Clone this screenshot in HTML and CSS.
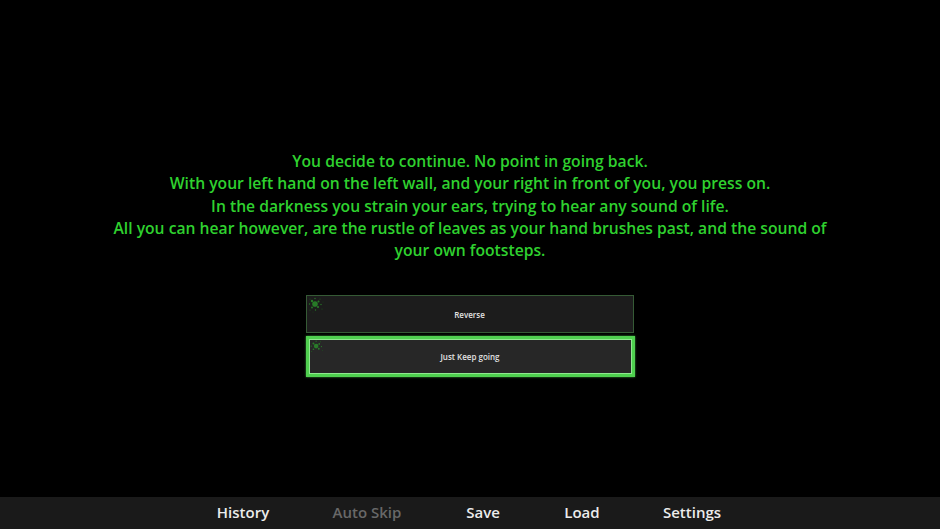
FILE: index.html
```html
<!DOCTYPE html>
<html>
<head>
<meta charset="utf-8">
<link rel="stylesheet" href="styles.css">
</head>
<body>
<div class="screen">
  <main class="stage">
    <div class="narration">
      <p>You decide to continue. No point in going back.</p>
      <p>With your left hand on the left wall, and your right in front of you, you press on.</p>
      <p>In the darkness you strain your ears, trying to hear any sound of life.</p>
      <p>All you can hear however, are the rustle of leaves as your hand brushes past, and the sound of your own footsteps.</p>
    </div>
    <div class="choices">
      <button class="choice">
        <svg class="splat" width="18" height="18" viewBox="0 0 18 18"><g fill="#2a8a2a" opacity="0.85"><circle cx="8" cy="8" r="2.8"/><circle cx="5" cy="5" r="1.2"/><circle cx="11.5" cy="5.5" r="1"/><circle cx="11" cy="11" r="1.1"/><circle cx="5" cy="11.5" r="0.9"/><circle cx="14" cy="8.5" r="0.7"/><circle cx="8" cy="2.5" r="0.7"/><circle cx="2.5" cy="8" r="0.7"/><circle cx="8.5" cy="14" r="0.7"/></g><g fill="#1e5c1e"><circle cx="13" cy="3" r="0.6"/><circle cx="3" cy="14" r="0.6"/><circle cx="15" cy="13" r="0.5"/><circle cx="3" cy="3" r="0.6"/><circle cx="16" cy="6" r="0.4"/><circle cx="6" cy="16" r="0.4"/></g></svg>
        <span>Reverse</span>
      </button>
      <button class="choice active">
        <svg class="splat" width="16" height="16" viewBox="0 0 18 18"><g fill="#2a8a2a" opacity="0.85"><circle cx="8" cy="8" r="2.6"/><circle cx="5" cy="5" r="1.1"/><circle cx="11.5" cy="5.5" r="1"/><circle cx="11" cy="11" r="1.1"/><circle cx="5" cy="11.5" r="0.9"/><circle cx="14" cy="8.5" r="0.7"/><circle cx="8" cy="2.5" r="0.7"/><circle cx="2.5" cy="8" r="0.7"/></g><g fill="#1e5c1e"><circle cx="13" cy="3" r="0.6"/><circle cx="3" cy="14" r="0.6"/><circle cx="15" cy="13" r="0.5"/></g></svg>
        <span>Just Keep going</span>
      </button>
    </div>
  </main>
  <nav class="menu">
    <a class="item">History</a>
    <a class="item disabled">Auto Skip</a>
    <a class="item">Save</a>
    <a class="item">Load</a>
    <a class="item">Settings</a>
  </nav>
</div>
</body>
</html>
```
FILE: styles.css
```css
html, body {
  margin: 0;
  padding: 0;
  background: #000;
}
body {
  font-family: "Open Sans", "Noto Sans", sans-serif;
}
.screen {
  width: 940px;
  height: 529px;
  display: flex;
  flex-direction: column;
  background: #000;
}
.stage {
  flex: 1;
  display: flex;
  flex-direction: column;
  align-items: center;
  padding-top: 150px;
}
.narration {
  width: 722px;
  text-align: center;
  color: #2fd12f;
  font-size: 15.7px;
  font-weight: 600;
  line-height: 22.3px;
}
.narration p {
  margin: 0;
}
.choices {
  margin-top: 34px;
  display: flex;
  flex-direction: column;
  gap: 3px;
}
.choice {
  position: relative;
  width: 328px;
  height: 38px;
  background: #1c1c1c;
  border: 1px solid #355a35;
  color: #e2e2e2;
  font-family: "Open Sans", "Noto Sans", sans-serif;
  font-size: 8px;
  font-weight: 600;
  display: flex;
  align-items: center;
  justify-content: center;
  padding: 0;
}
.choice.active {
  width: 329px;
  height: 41px;
  background: #272727;
  border: 3px solid #4fd04f;
  box-shadow: inset 0 0 0 1px #8fe88f, 0 0 2px #3a9a3a;
}
.splat {
  position: absolute;
  left: 0;
  top: 0;
}
.menu {
  height: 32px;
  box-sizing: border-box;
  padding-bottom: 3px;
  background: #1a1a1a;
  display: flex;
  align-items: center;
  padding-left: 203px;
}
.item {
  width: 80px;
  color: #ececec;
  font-size: 15px;
  font-weight: 600;
  text-align: center;
  white-space: nowrap;
}
.item:nth-child(2) { margin-left: 44px; }
.item:nth-child(3) { margin-left: 36px; }
.item:nth-child(4) { margin-left: 19px; }
.item:nth-child(5) { margin-left: 30px; }
.item.disabled {
  color: #686868;
}
```
